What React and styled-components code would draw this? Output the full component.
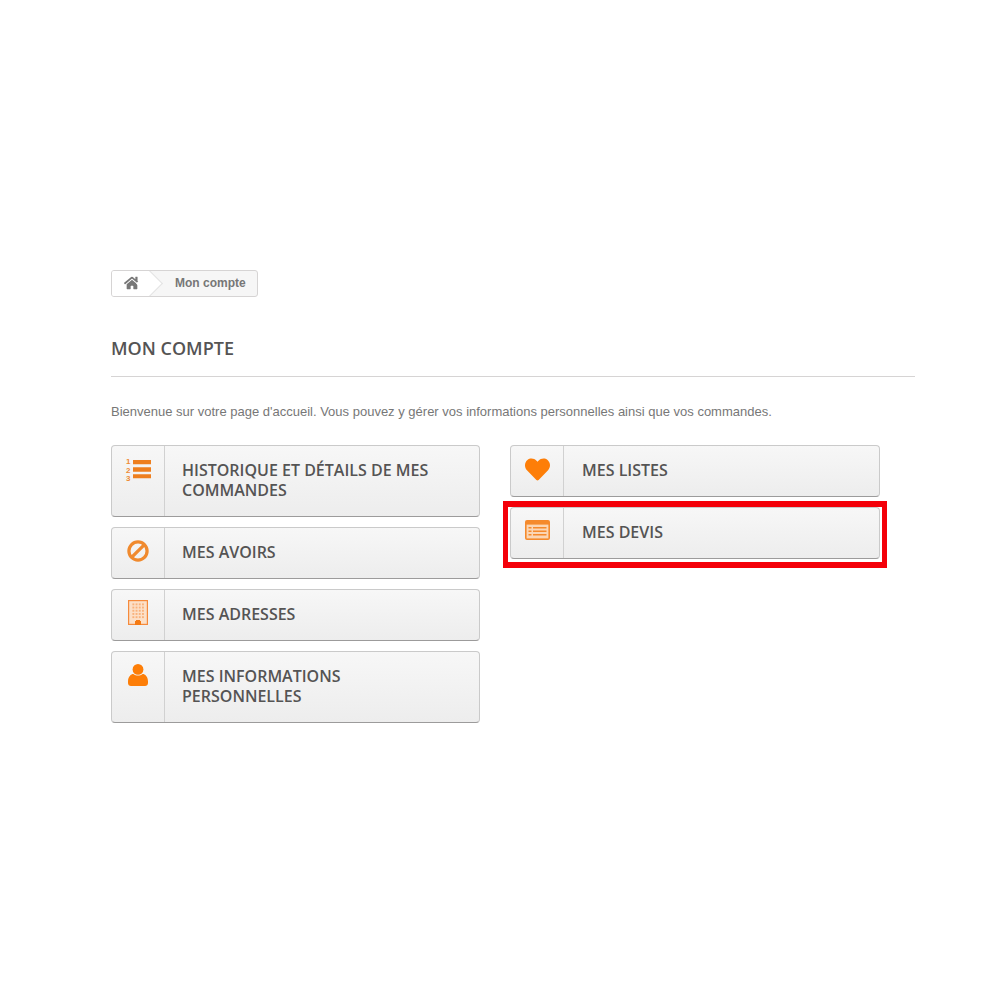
import React from "react";
import styled, { createGlobalStyle } from "styled-components";
import { FaHome, FaHeart } from "react-icons/fa";

const GlobalStyle = createGlobalStyle`
  html, body {
    margin: 0;
    background: #fff;
  }
`;

const Page = styled.div`
  box-sizing: border-box;
  width: 1000px;
  height: 1000px;
  padding: 270px 85px 0 111px;
  font-family: "Liberation Sans", Arial, sans-serif;
  overflow: hidden;
`;

const Breadcrumb = styled.nav`
  box-sizing: border-box;
  display: inline-flex;
  align-items: stretch;
  height: 27px;
  border: 1px solid #d6d4d4;
  border-radius: 3px;
  background: #f6f6f6;
  overflow: hidden;
  vertical-align: top;
`;

const HomeCell = styled.span`
  position: relative;
  display: flex;
  align-items: center;
  width: 38px;
  padding: 0 0 2px 12px;
  box-sizing: border-box;
  background: #fff;
  color: #777;
  font-size: 16px;

  &::after {
    content: "";
    position: absolute;
    right: -9px;
    top: 3px;
    width: 18px;
    height: 18px;
    background: #fff;
    border-top: 1px solid #e2e2e2;
    border-right: 1px solid #e2e2e2;
    transform: rotate(45deg);
  }
`;

const Crumb = styled.span`
  display: flex;
  align-items: center;
  padding: 0 11px 2px 25px;
  font-size: 12px;
  font-weight: 700;
  color: #777;
`;

const Heading = styled.h1`
  margin: 40px 0 0;
  padding-bottom: 17px;
  border-bottom: 1px solid #d6d4d4;
  font-family: "Open Sans", sans-serif;
  font-size: 18px;
  line-height: 22px;
  font-weight: 600;
  color: #555454;
  text-transform: uppercase;
`;

const Intro = styled.p`
  margin: 27px 0 0;
  font-size: 13px;
  line-height: 15px;
  color: #777;
`;

const Columns = styled.div`
  display: grid;
  grid-template-columns: 369px 370px;
  column-gap: 30px;
  margin-top: 26px;
`;

const Column = styled.ul`
  display: flex;
  flex-direction: column;
  gap: 10px;
  margin: 0;
  padding: 0;
  list-style: none;
`;

const Item = styled.li`
  position: relative;
  display: flex;
  box-sizing: border-box;
  min-height: 52px;
  border: 1px solid #cacaca;
  border-bottom-color: #9c9b9b;
  border-radius: 4px;
  background: linear-gradient(to bottom, #f7f7f7 0%, #ededed 100%);
  overflow: ${(p) => (p.$marked ? "visible" : "hidden")};
`;

const IconCell = styled.span`
  flex: none;
  display: flex;
  justify-content: center;
  box-sizing: border-box;
  width: 53px;
  padding-top: ${(p) => p.$top || 8}px;
  border-right: 1px solid #d1d1d1;
  color: #fd7e08;
  font-size: 25px;
  line-height: 1;
`;

const Label = styled.span`
  display: flex;
  align-items: center;
  padding: 14px 40px 16px ${(p) => p.$indent}px;
  font-family: "Open Sans", sans-serif;
  font-size: 16px;
  line-height: 20px;
  font-weight: 600;
  color: #555454;
  text-transform: uppercase;
`;

const RedFrame = styled.span`
  position: absolute;
  left: -8px;
  top: -7px;
  right: -8px;
  bottom: -10px;
  border-style: solid;
  border-color: #f40009;
  border-width: 6px 5px;
  pointer-events: none;
`;

const Numeral = styled.text`
  font-family: "Liberation Sans", Arial, sans-serif;
  font-size: 8px;
  font-weight: 700;
  fill: #ee8a35;
`;

function OrderListIcon() {
  return (
    <svg width="27" height="27" viewBox="0 0 27 27">
      <Numeral x="1" y="8">1</Numeral>
      <Numeral x="1" y="16.500">2</Numeral>
      <Numeral x="1" y="25">3</Numeral>
      <path d="M8 4h18v4.300H8zM8 11.300h18v4.400H8zM8 18.300h18v4H8z" fill="#ee7f1f" />
    </svg>
  );
}

function BanIcon() {
  return (
    <svg width="22" height="22" viewBox="0 0 23 23">
      <circle cx="11.500" cy="11.500" r="9.500" fill="none" stroke="#f08a2e" strokeWidth="3.400" />
      <path d="M4.800 18.200 18.200 4.800" stroke="#f08a2e" strokeWidth="3.400" />
    </svg>
  );
}

function BuildingIcon() {
  const dots = [];
  for (let row = 0; row < 5; row++) {
    for (let col = 0; col < 4; col++) {
      dots.push(<rect key={`${row}-${col}`} x={4.400 + col * 3.200} y={3.400 + row * 3.200} width="1.900" height="1.900" fill="#f9b27c" />);
    }
  }
  return (
    <svg width="20" height="25" viewBox="0 0 20 25">
      <rect x="0.600" y="0.600" width="18.800" height="23.800" fill="#fce0c8" stroke="#f58a3c" strokeWidth="1.200" />
      {dots}
      <path d="M7 25v-4h1v-1h4v1h1v4z" fill="#f57b14" />
    </svg>
  );
}

function UserIcon() {
  return (
    <svg width="20" height="22" viewBox="0 0 20 22">
      <circle cx="10" cy="5.400" r="5.400" fill="#fd7e08" />
      <path d="M0 17.500c0-4.800 3-7.400 5.400-7.400 1.400 1 2.900 1.500 4.600 1.500s3.200-.5 4.600-1.500c2.400 0 5.400 2.600 5.400 7.400V19c0 1.900-1.300 3-3 3H3c-1.700 0-3-1.100-3-3z" fill="#fd7e08" />
    </svg>
  );
}

function QuoteIcon() {
  return (
    <svg width="25" height="20" viewBox="0 0 25 20">
      <path d="M2 0h21a2 2 0 0 1 2 2v16a2 2 0 0 1-2 2H2a2 2 0 0 1-2-2V2a2 2 0 0 1 2-2z" fill="#f58a2c" />
      <rect x="1.600" y="4.600" width="21.800" height="13.800" fill="#fbd6b4" />
      <path d="M3.500 7h3v1.500h-3zM8 7h13.500v1.500H8zM3.500 10.500h3V12h-3zM8 10.500h13.500V12H8zM3.500 14h3v1.500h-3zM8 14h13.500v1.500H8z" fill="#f58a2c" />
    </svg>
  );
}

const leftItems = [
  { label: "Historique et détails de mes commandes", icon: <OrderListIcon />, top: 10 },
  { label: "Mes avoirs", icon: <BanIcon />, top: 12 },
  { label: "Mes adresses", icon: <BuildingIcon />, top: 10 },
  { label: "Mes informations personnelles", icon: <UserIcon />, top: 12 },
];

const rightItems = [
  { label: "Mes listes", icon: <FaHeart />, top: 11 },
  { label: "Mes devis", icon: <QuoteIcon />, top: 12, marked: true },
];

function MenuColumn({ items, indent }) {
  return (
    <Column>
      {items.map((item) => (
        <Item key={item.label} $marked={item.marked}>
          <IconCell $top={item.top}>{item.icon}</IconCell>
          <Label $indent={indent}>{item.label}</Label>
          {item.marked && <RedFrame />}
        </Item>
      ))}
    </Column>
  );
}

export default function App() {
  return (
    <Page>
      <GlobalStyle />
      <Breadcrumb>
        <HomeCell>
          <FaHome />
        </HomeCell>
        <Crumb>Mon compte</Crumb>
      </Breadcrumb>
      <Heading>Mon compte</Heading>
      <Intro>
        Bienvenue sur votre page d'accueil. Vous pouvez y gérer vos informations personnelles ainsi que vos commandes.
      </Intro>
      <Columns>
        <MenuColumn items={leftItems} indent={17} />
        <MenuColumn items={rightItems} indent={18} />
      </Columns>
    </Page>
  );
}
